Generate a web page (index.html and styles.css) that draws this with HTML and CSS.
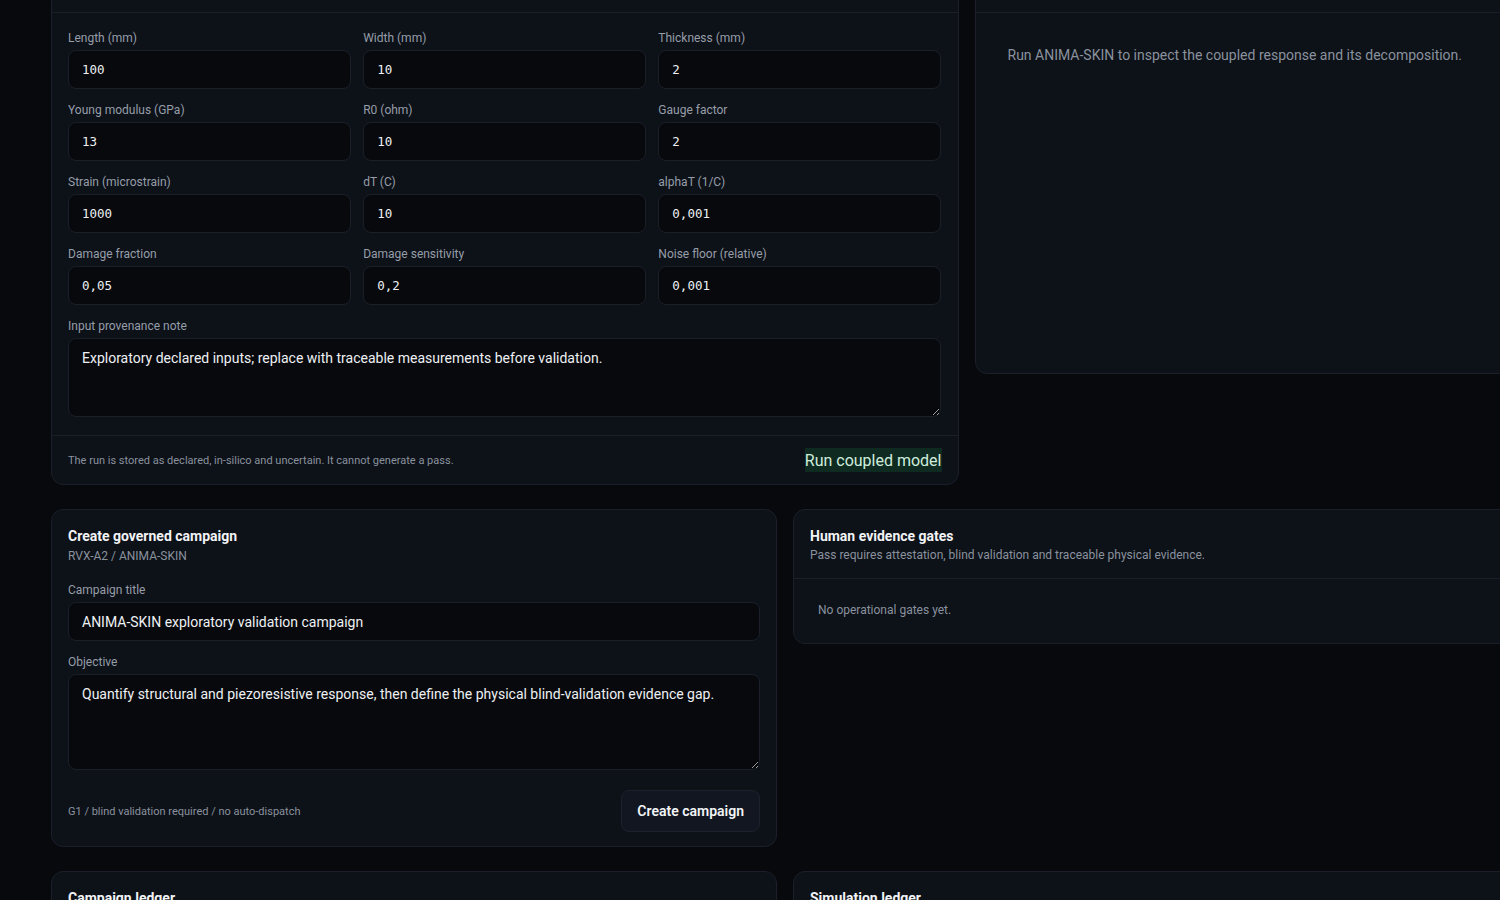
FILE: index.html
```html
<!DOCTYPE html>
<html>
<head>
<meta name="viewport" content="width=device-width, initial-scale=1.0">
<link rel="stylesheet" href="styles.css">
<title>ANIMA-SKIN workbench</title>
</head>
<body>
<div class="page">

  <!-- simulation row -->
  <div class="row row-sim">
    <div class="card">
      <div class="card-head">
        <div class="card-title">ANIMA-SKIN coupled model</div>
        <div class="card-sub">Declared inputs for the in-silico run.</div>
      </div>
      <div class="card-body">
        <div class="fields">
          <div class="field"><label>Length (mm)</label><input class="num" value="100"></div>
          <div class="field"><label>Width (mm)</label><input class="num" value="10"></div>
          <div class="field"><label>Thickness (mm)</label><input class="num" value="2"></div>
          <div class="field"><label>Young modulus (GPa)</label><input class="num" value="13"></div>
          <div class="field"><label>R0 (ohm)</label><input class="num" value="10"></div>
          <div class="field"><label>Gauge factor</label><input class="num" value="2"></div>
          <div class="field"><label>Strain (microstrain)</label><input class="num" value="1000"></div>
          <div class="field"><label>dT (C)</label><input class="num" value="10"></div>
          <div class="field"><label>alphaT (1/C)</label><input class="num" value="0,001"></div>
          <div class="field"><label>Damage fraction</label><input class="num" value="0,05"></div>
          <div class="field"><label>Damage sensitivity</label><input class="num" value="0,2"></div>
          <div class="field"><label>Noise floor (relative)</label><input class="num" value="0,001"></div>
          <div class="field wide">
            <label>Input provenance note</label>
            <textarea class="note">Exploratory declared inputs; replace with traceable measurements before validation.</textarea>
          </div>
        </div>
      </div>
      <div class="card-foot">
        <span class="hint">The run is stored as declared, in-silico and uncertain. It cannot generate a pass.</span>
        <button class="run-btn">Run coupled model</button>
      </div>
    </div>

    <div class="card card-result">
      <div class="card-head">
        <div class="card-title">Coupled response</div>
        <div class="card-sub">Structural, piezoresistive and thermal terms.</div>
      </div>
      <div class="card-body">
        <p class="empty-big">Run ANIMA-SKIN to inspect the coupled response and its decomposition.</p>
      </div>
    </div>
  </div>

  <!-- campaign row -->
  <div class="row">
    <div class="card card-pad">
      <div class="card-title">Create governed campaign</div>
      <div class="card-sub">RVX-A2 / ANIMA-SKIN</div>
      <div class="field top-gap"><label>Campaign title</label><input class="text" value="ANIMA-SKIN exploratory validation campaign"></div>
      <div class="field field-gap">
        <label>Objective</label>
        <textarea class="objective">Quantify structural and piezoresistive response, then define the physical blind-validation evidence gap.</textarea>
      </div>
      <div class="form-foot">
        <span class="hint">G1 / blind validation required / no auto-dispatch</span>
        <button class="create-btn">Create campaign</button>
      </div>
    </div>

    <div class="card">
      <div class="card-head gates-head">
        <div class="card-title">Human evidence gates</div>
        <div class="card-sub tight">Pass requires attestation, blind validation and traceable physical evidence.</div>
      </div>
      <div class="card-body">
        <p class="empty">No operational gates yet.</p>
      </div>
    </div>
  </div>

  <!-- ledgers -->
  <div class="row">
    <div class="card card-pad ledger">
      <div class="card-title">Campaign ledger</div>
      <div class="card-sub">No campaigns recorded.</div>
    </div>
    <div class="card card-pad ledger">
      <div class="card-title">Simulation ledger</div>
      <div class="card-sub">No runs recorded.</div>
    </div>
  </div>

</div>
</body>
</html>
```

FILE: styles.css
```css
* {
  box-sizing: border-box;
}

html, body {
  overflow: hidden;
}

body {
  margin: 0;
  background-color: #07090d;
  color: #e7eaef;
  font-family: Roboto, "Noto Sans", sans-serif;
}

.page {
  width: 1468px;
  margin: -54px 0 0 51px;
  display: flex;
  flex-direction: column;
  gap: 24px;
}

.row {
  display: grid;
  grid-template-columns: 1fr 1fr;
  gap: 16px;
  align-items: start;
}

.row-sim {
  grid-template-columns: 5fr 3fr;
}

/* cards */
.card {
  background-color: #0d1118;
  border: 1px solid #1a1f29;
  border-radius: 12px;
}

.card-pad {
  padding: 15px 16px 14px;
}

.card-head {
  padding: 12px 16px 13px;
  border-bottom: 1px solid #1a1f29;
}

.card-title {
  font-size: 14px;
  font-weight: 700;
  line-height: 22px;
  color: #f1f3f6;
}

.card-sub {
  font-size: 12px;
  line-height: 18px;
  color: #8a929e;
}

.card-sub.tight {
  line-height: 16px;
}

.gates-head {
  padding: 15px 16px 15px;
}

.card-body {
  padding: 16px 16px 18px;
}

.card-result {
  min-height: 428px;
}

.empty-big {
  margin: 0;
  padding: 16px;
  font-size: 14px;
  line-height: 20px;
  color: #8a929e;
}

.empty {
  margin: 0;
  padding: 6px 8px;
  font-size: 12px;
  line-height: 18px;
  color: #8a929e;
}

/* fields */
.fields {
  display: grid;
  grid-template-columns: repeat(3, 1fr);
  gap: 12px;
}

.field {
  display: flex;
  flex-direction: column;
  gap: 3px;
}

.field.wide {
  grid-column: 1 / -1;
}

.top-gap {
  margin-top: 16px;
}

.field-gap {
  margin-top: 12px;
}

label {
  font-size: 12px;
  line-height: 18px;
  color: #969ea9;
}

input, textarea {
  width: 100%;
  background-color: #07090d;
  border: 1px solid #1a1f29;
  border-radius: 8px;
  color: #eef0f3;
  outline: none;
}

input {
  height: 39px;
  padding: 0 13px;
}

input.num {
  font-family: "DejaVu Sans Mono", monospace;
  font-size: 12.5px;
}

input.text {
  font-family: Roboto, "Noto Sans", sans-serif;
  font-size: 14px;
}

textarea {
  font-family: Roboto, "Noto Sans", sans-serif;
  font-size: 14px;
  line-height: 20px;
  padding: 9px 13px;
}

textarea.note {
  height: 79px;
}

textarea.objective {
  height: 96px;
}

/* footers */
.card-foot {
  border-top: 1px solid #1a1f29;
  padding: 12px 16px;
  display: flex;
  justify-content: space-between;
  align-items: center;
}

.hint {
  font-size: 11px;
  color: #8a929e;
}

.run-btn {
  background-color: #0f2a21;
  color: #cfeedd;
  border: none;
  padding: 0;
  height: 24px;
  font-family: Roboto, "Noto Sans", sans-serif;
  font-size: 16px;
  cursor: pointer;
}

.form-foot {
  margin-top: 20px;
  display: flex;
  justify-content: space-between;
  align-items: center;
}

.create-btn {
  height: 42px;
  padding: 0 15px;
  background-color: #111620;
  border: 1px solid #1c222d;
  border-radius: 8px;
  color: #f2f4f7;
  font-family: Roboto, "Noto Sans", sans-serif;
  font-size: 14px;
  font-weight: 600;
  cursor: pointer;
}

.ledger {
  min-height: 120px;
}
```
